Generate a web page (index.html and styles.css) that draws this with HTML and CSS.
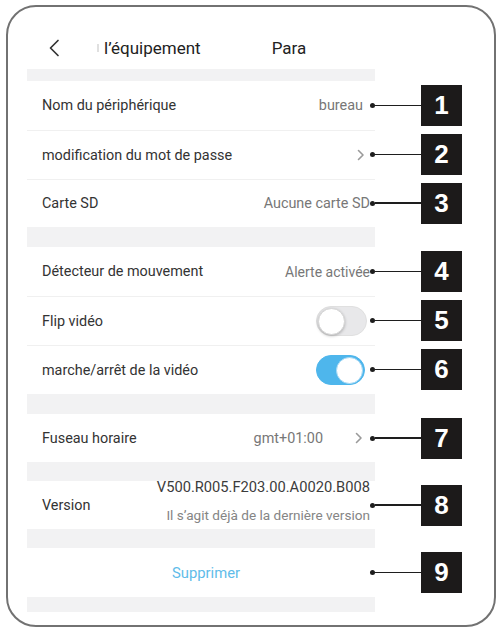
FILE: index.html
```html
<!DOCTYPE html>
<html lang="fr">
<head>
<meta charset="utf-8">
<title>Paramètres de l'équipement</title>
<link rel="stylesheet" href="styles.css">
</head>
<body>
<div class="frame">
  <div class="header">
    <svg class="back" width="12" height="18" viewBox="0 0 12 18"><polyline points="10,1.5 2.5,9 10,16.5" fill="none" stroke="#333" stroke-width="1.7" stroke-linecap="round" stroke-linejoin="round"/></svg>
    <span class="sliver"></span>
    <span class="title">l’équipement</span>
    <span class="title title-right">Para</span>
  </div>

  <div class="band band-12"></div>
  <div class="row">
    <div class="cell h49"><span class="label">Nom du périphérique</span><span class="value pr-12">bureau</span></div>
    <div class="callout"><i class="dot"></i><i class="line"></i><b class="num">1</b></div>
  </div>
  <div class="row">
    <div class="cell h49 sep"><span class="label">modification du mot de passe</span><svg class="chev pr-10" width="8" height="12" viewBox="0 0 8 12"><polyline points="1.5,1.5 6,6 1.5,10.5" fill="none" stroke="#9a9a9a" stroke-width="1.6" stroke-linecap="round" stroke-linejoin="round"/></svg></div>
    <div class="callout"><i class="dot"></i><i class="line"></i><b class="num">2</b></div>
  </div>
  <div class="row">
    <div class="cell h48 sep"><span class="label">Carte SD</span><span class="value pr-5">Aucune carte SD</span></div>
    <div class="callout"><i class="dot"></i><i class="line"></i><b class="num">3</b></div>
  </div>

  <div class="band band-20"></div>
  <div class="row">
    <div class="cell h49"><span class="label">Détecteur de mouvement</span><span class="value pr-5 val-tight">Alerte activée</span></div>
    <div class="callout"><i class="dot"></i><i class="line"></i><b class="num">4</b></div>
  </div>
  <div class="row">
    <div class="cell h49 sep"><span class="label">Flip vidéo</span><span class="toggle pr-8"><span class="knob"></span></span></div>
    <div class="callout"><i class="dot"></i><i class="line"></i><b class="num">5</b></div>
  </div>
  <div class="row">
    <div class="cell h49 sep"><span class="label">marche/arrêt de la vidéo</span><span class="toggle toggle-on pr-10"><span class="knob"></span></span></div>
    <div class="callout"><i class="dot"></i><i class="line"></i><b class="num">6</b></div>
  </div>

  <div class="band band-20"></div>
  <div class="row">
    <div class="cell h48"><span class="label">Fuseau horaire</span><span class="value tz">gmt+01:00</span><svg class="chev pr-12" width="8" height="12" viewBox="0 0 8 12"><polyline points="1.5,1.5 6,6 1.5,10.5" fill="none" stroke="#9a9a9a" stroke-width="1.6" stroke-linecap="round" stroke-linejoin="round"/></svg></div>
    <div class="callout"><i class="dot"></i><i class="line"></i><b class="num">7</b></div>
  </div>

  <div class="band band-19"></div>
  <div class="row">
    <div class="cell h48"><span class="label">Version</span><span class="version pr-5"><span class="ver-main">V500.R005.F203.00.A0020.B008</span><span class="ver-sub">Il s’agit déjà de la dernière version</span></span></div>
    <div class="callout"><i class="dot"></i><i class="line"></i><b class="num">8</b></div>
  </div>

  <div class="band band-19"></div>
  <div class="row">
    <div class="cell h49 cell-center"><span class="delete">Supprimer</span></div>
    <div class="callout"><i class="dot"></i><i class="line"></i><b class="num">9</b></div>
  </div>
  <div class="band band-15"></div>
</div>
</body>
</html>
```

FILE: styles.css
```css
html, body {
  margin: 0;
  padding: 0;
  background: #ffffff;
}

body {
  font-family: Roboto, "Liberation Sans", Arial, sans-serif;
  font-size: 14.4px;
  color: #333333;
}

.frame {
  box-sizing: border-box;
  margin: 5px 0 0 6px;
  width: 490px;
  height: 622px;
  border: 2px solid #727272;
  border-radius: 30px;
  padding-left: 19px;
  overflow: hidden;
}

.header {
  box-sizing: border-box;
  height: 62px;
  width: 348px;
  padding-top: 20px;
  display: flex;
  align-items: center;
}

.back {
  margin-left: 21px;
  flex: none;
}

.sliver {
  width: 2px;
  height: 8px;
  background: #e0e0e0;
  margin-left: 37px;
  flex: none;
}

.title {
  font-size: 17px;
  color: #222222;
  margin-left: 5px;
}

.title-right {
  margin-left: 71px;
}

.band {
  width: 348px;
  background: #f2f2f3;
}

.band-12 { height: 12px; }
.band-15 { height: 15px; }
.band-19 { height: 19px; }
.band-20 { height: 20px; }

.row {
  display: flex;
  align-items: center;
}

.cell {
  box-sizing: border-box;
  width: 348px;
  flex: none;
  display: flex;
  align-items: center;
  padding-left: 15px;
}

.h48 { height: 48px; }
.h49 { height: 49px; }

.sep {
  border-top: 1px solid #f0f0f0;
}

.label {
  flex: 1;
  white-space: nowrap;
  color: #333333;
}

.value {
  color: #777777;
  white-space: nowrap;
}

.val-tight {
  font-size: 14px;
}

.tz {
  margin-right: 32px;
}

.pr-5 { margin-right: 5px; }
.pr-8 { margin-right: 8px; }
.pr-10 { margin-right: 10px; }
.pr-12 { margin-right: 12px; }

.chev {
  flex: none;
}

.toggle {
  box-sizing: border-box;
  width: 51px;
  height: 30px;
  border-radius: 15px;
  background: #e8e8ea;
  border: 1px solid #e0e0e0;
  display: flex;
  align-items: center;
  padding: 0 1px;
  flex: none;
}

.knob {
  box-sizing: border-box;
  width: 27px;
  height: 27px;
  border-radius: 50%;
  background: #ffffff;
  border: 1px solid #d6d6d6;
  box-shadow: 0 1px 3px rgba(0, 0, 0, 0.25);
}

.toggle-on {
  width: 49px;
  background: #4eb6ec;
  border-color: #4eb6ec;
  justify-content: flex-end;
}

.toggle-on .knob {
  border: 1px solid #a8d9f4;
  box-shadow: none;
}

.version {
  display: flex;
  flex-direction: column;
  align-items: flex-end;
  align-self: flex-start;
  margin-top: -3px;
  white-space: nowrap;
}

.ver-main {
  font-size: 14.7px;
  line-height: 18px;
  color: #3c3c3c;
}

.ver-sub {
  font-size: 13.6px;
  line-height: 16px;
  margin-top: 11px;
  color: #858585;
}

.cell-center {
  justify-content: center;
  padding-left: 10px;
}

.delete {
  color: #5fbce9;
  font-size: 14.8px;
}

.callout {
  display: flex;
  align-items: center;
  margin-left: -5px;
  flex: none;
}

.dot {
  width: 5px;
  height: 5px;
  border-radius: 50%;
  background: #1e1e1e;
  flex: none;
}

.line {
  width: 46px;
  height: 1.5px;
  background: #1e1e1e;
  flex: none;
}

.num {
  width: 41px;
  height: 41px;
  background: #1c1a1a;
  color: #ffffff;
  font-family: "Liberation Sans", Arial, sans-serif;
  font-weight: bold;
  font-size: 26px;
  display: flex;
  align-items: center;
  justify-content: center;
  flex: none;
}
```
